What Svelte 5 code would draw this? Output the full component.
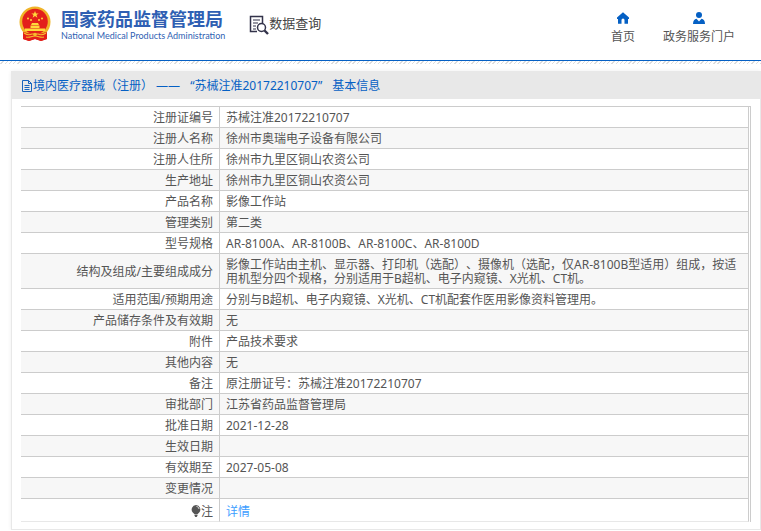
<script>
  const rows = [
    ['注册证编号', '苏械注准20172210707'],
    ['注册人名称', '徐州市奥瑞电子设备有限公司'],
    ['注册人住所', '徐州市九里区铜山农资公司'],
    ['生产地址', '徐州市九里区铜山农资公司'],
    ['产品名称', '影像工作站'],
    ['管理类别', '第二类'],
    ['型号规格', 'AR-8100A、AR-8100B、AR-8100C、AR-8100D'],
    ['结构及组成/主要组成成分', '影像工作站由主机、显示器、打印机（选配）、摄像机（选配，仅AR-8100B型适用）组成，按适用机型分四个规格，分别适用于B超机、电子内窥镜、X光机、CT机。'],
    ['适用范围/预期用途', '分别与B超机、电子内窥镜、X光机、CT机配套作医用影像资料管理用。'],
    ['产品储存条件及有效期', '无'],
    ['附件', '产品技术要求'],
    ['其他内容', '无'],
    ['备注', '原注册证号：苏械注准20172210707'],
    ['审批部门', '江苏省药品监督管理局'],
    ['批准日期', '2021-12-28'],
    ['生效日期', ''],
    ['有效期至', '2027-05-08'],
    ['变更情况', '']
  ];
</script>

<header>
  <a class="brand" href="#home">
    <svg class="emblem" viewBox="0 0 32 36" aria-hidden="true">
      <path d="M4 24 4 33l6 2 6-2 6 2 6-2V24z" fill="#e0211b" />
      <circle cx="16" cy="16" r="15.500" fill="#f0b428" />
      <circle cx="16" cy="15.500" r="12.800" fill="#e3201b" />
      <path d="m16 5 1 2.500h2.700l-2.200 1.600.9 2.600L16 10.100l-2.400 1.600.9-2.600-2.200-1.600H15z" fill="#ffd93b" />
      <g fill="#ffd93b">
        <circle cx="9" cy="12.500" r="1" /><circle cx="12" cy="14" r="1" />
        <circle cx="20" cy="14" r="1" /><circle cx="23" cy="12.500" r="1" />
        <path d="m12 19 1-2h6l1 2zM11.500 19.500h9V22h-9zM6 22.500h20V25H6z" />
      </g>
      <path d="M5 26c4 2 7 1 11 1s7 1 11-1l1 7-6 2-6-2-6 2-6-2z" fill="#e3201b" />
      <path d="M5 27c3 2 6 2 8 1h6c2 1 5 1 8-1M7 31c4 1 5-1 9-1s5 2 9 1" fill="none" stroke="#f5bd2d" stroke-width="1.200" />
      <circle cx="16" cy="28.500" r="1.800" fill="#f5bd2d" />
    </svg>
    <span class="names">
      <span class="cn">国家药品监督管理局</span>
      <span class="en">National Medical Products Administration</span>
    </span>
  </a>
  <a class="query" href="#query">
    <svg viewBox="0 0 20 20" aria-hidden="true" fill="none" stroke="#33334a">
      <path d="M8 16.500H1.500v-15h12V8" stroke-width="1.500" />
      <path d="M4 5h7M4 8h5M4 11h3M4 14h3" stroke-width="1.200" />
      <circle cx="12.500" cy="12.500" r="4" stroke-width="1.500" />
      <path d="m15.500 15.500 3.500 3.500" stroke-width="2.400" />
    </svg>
    <span>数据查询</span>
  </a>
  <nav>
    <a href="#index">
      <svg viewBox="0 0 12 12" aria-hidden="true"><path d="M6 .3 0 5.500V7h1v4.700h3.500V8a1.500 1.500 0 0 1 3 0v3.700H11V7h1V5.500z" fill="#0560c4" /></svg>
      <span>首页</span>
    </a>
    <a href="#portal">
      <svg viewBox="0 0 12 12" aria-hidden="true"><circle cx="6" cy="3" r="3" fill="#0560c4" /><path d="M0 12c0-3.500 1.500-5 3.500-5.300L6 9.500l2.500-2.800C10.500 7 12 8.500 12 12z" fill="#0560c4" /></svg>
      <span>政务服务门户</span>
    </a>
  </nav>
</header>
<div class="hatch"></div>

<main>
  <h1>
    <svg viewBox="0 0 12 12" aria-hidden="true" fill="none" stroke="#1763bd"><path d="M1.500.5h6l3 3v8h-9zM7.500.5v3h3M3.500 5.500h5M3.500 7.500h5M3.500 9.500h5" /></svg>
    <span>境内医疗器械（注册） ——</span>
    <span>“苏械注准20172210707”</span>
    <span>基本信息</span>
  </h1>
  <div class="body">
    <table>
      <tbody>
        {#each rows as [label, value]}
          <tr><th scope="row">{label}</th><td>{value}</td></tr>
        {/each}
        <tr class="note">
          <th scope="row">
            <svg viewBox="0 0 10 12" aria-hidden="true"><path d="M5 0a4.600 4.600 0 0 0-3.200 7.600L3.300 9h3.400l1.500-1.400A4.600 4.600 0 0 0 5 0zM3.500 9.500h3v1.200L5.700 12H4.300l-.8-1.300z" fill="#555" /><path d="M5.500 1.500c1.500.2 2.300 1 2.500 2.500" fill="none" stroke="#fff" stroke-width=".8" /></svg>注
          </th>
          <td><a href="#detail">详情</a></td>
        </tr>
      </tbody>
    </table>
  </div>
</main>

<style>
  :global(body) {
    margin: 0;
    background: #fff;
    color: #555;
    font: 12px/14px "Noto Sans", "Noto Sans CJK SC", sans-serif;
    text-spacing-trim: space-all;
  }
  a {
    text-decoration: none;
    color: inherit;
  }
  svg {
    display: block;
    flex: none;
  }
  header {
    display: flex;
    align-items: flex-start;
    height: 60px;
    padding: 0 26px 0 19px;
    border-bottom: 1px solid #0560c4;
  }
  .brand {
    display: flex;
    gap: 10px;
    padding-top: 6px;
    color: #2f5fb3;
    white-space: nowrap;
  }
  .emblem {
    width: 32px;
    height: 36px;
  }
  .names {
    display: flex;
    flex-direction: column;
    padding-top: 2px;
  }
  .cn {
    font: bold 18px/20px "Noto Sans CJK SC", sans-serif;
  }
  .en {
    font: 9px/16px Lato, sans-serif;
  }
  .query {
    display: flex;
    align-items: flex-start;
    margin: 13px 0 0 24px;
    color: #444;
    font: 13px/20px "Noto Sans CJK SC", sans-serif;
    white-space: nowrap;
  }
  .query svg {
    width: 20px;
    height: 20px;
    margin-top: 2px;
  }
  nav {
    display: flex;
    gap: 28px;
    margin-left: auto;
    padding-top: 12px;
  }
  nav a {
    display: flex;
    flex-direction: column;
    align-items: center;
    gap: 6px;
    white-space: nowrap;
  }
  nav svg {
    width: 12px;
    height: 12px;
  }
  .hatch {
    height: 3px;
    background: repeating-linear-gradient(135deg, #fff 0 2px, #ddd 2px 3px);
  }
  main {
    margin: 7px 0 0 11px;
    border: 1px solid #e8e8e8;
    border-top: 0;
    box-shadow: 0 0 4px #eee;
  }
  h1 {
    display: flex;
    align-items: center;
    height: 27px;
    margin: 0;
    padding: 1px 9px 0;
    background: #e8e8e8;
    color: #0560c4;
    font-size: 12px;
    font-weight: normal;
  }
  h1 svg {
    width: 12px;
    height: 12px;
  }
  h1 span + span {
    margin-left: 10px;
  }
  .body {
    padding: 7px 9px;
  }
  table {
    width: 100%;
    border-collapse: separate;
    border-spacing: 0;
    border-top: 1px solid #ccc;
    border-right: 1px solid #ccc;
    padding-right: 1px;
  }
  th,
  td {
    padding: 4px 6px 2px;
    border-right: 1px solid #ccc;
    border-bottom: 1px solid #ccc;
    font-weight: normal;
  }
  th {
    width: 186px;
    text-align: right;
  }
  td {
    height: 14px;
    text-align: left;
  }
  tr:nth-child(even) {
    background: #f7f7f7;
  }
  .note th,
  .note td {
    padding: 6px 6px 2px;
    border-bottom-color: #e8e8e8;
  }
  .note svg {
    display: inline-block;
    width: 10px;
    height: 12px;
    vertical-align: -1px;
  }
  .note a {
    color: #409eff;
  }
</style>
